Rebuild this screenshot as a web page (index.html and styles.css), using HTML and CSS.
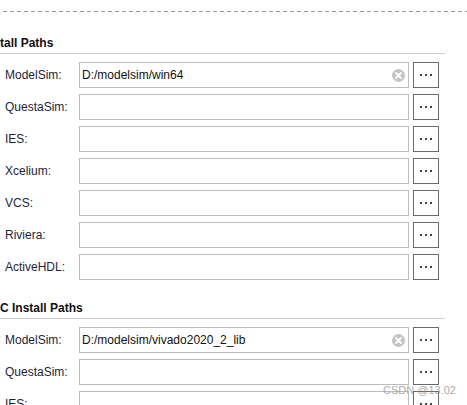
FILE: index.html
```html
<!DOCTYPE html>
<html>
<head>
<meta charset="utf-8">
<link rel="stylesheet" href="styles.css">
</head>
<body>
<div class="page">
  <div class="dash"></div>
  <section class="group first">
    <div class="group-title">tall Paths</div>
    <div class="rows">
      <div class="row"><span class="label">ModelSim:</span><div class="field"><span class="value">D:/modelsim/win64</span><span class="clear"><svg width="13" height="13" viewBox="0 0 13 13"><circle cx="6.5" cy="6.5" r="6.5" fill="#c4c4c4"/><path d="M4 4L9 9M9 4L4 9" stroke="#fff" stroke-width="1.8" stroke-linecap="round"/></svg></span></div><button class="browse"><i></i><i></i><i></i></button></div>
      <div class="row"><span class="label">QuestaSim:</span><div class="field"></div><button class="browse"><i></i><i></i><i></i></button></div>
      <div class="row"><span class="label">IES:</span><div class="field"></div><button class="browse"><i></i><i></i><i></i></button></div>
      <div class="row"><span class="label">Xcelium:</span><div class="field"></div><button class="browse"><i></i><i></i><i></i></button></div>
      <div class="row"><span class="label">VCS:</span><div class="field"></div><button class="browse"><i></i><i></i><i></i></button></div>
      <div class="row"><span class="label">Riviera:</span><div class="field"></div><button class="browse"><i></i><i></i><i></i></button></div>
      <div class="row"><span class="label">ActiveHDL:</span><div class="field"></div><button class="browse"><i></i><i></i><i></i></button></div>
    </div>
  </section>
  <section class="group second">
    <div class="group-title">C Install Paths</div>
    <div class="rows">
      <div class="row"><span class="label">ModelSim:</span><div class="field"><span class="value">D:/modelsim/vivado2020_2_lib</span><span class="clear"><svg width="13" height="13" viewBox="0 0 13 13"><circle cx="6.5" cy="6.5" r="6.5" fill="#c4c4c4"/><path d="M4 4L9 9M9 4L4 9" stroke="#fff" stroke-width="1.8" stroke-linecap="round"/></svg></span></div><button class="browse"><i></i><i></i><i></i></button></div>
      <div class="row"><span class="label">QuestaSim:</span><div class="field"></div><button class="browse"><i></i><i></i><i></i></button></div>
      <div class="row"><span class="label">IES:</span><div class="field"></div><button class="browse"><i></i><i></i><i></i></button></div>
    </div>
  </section>
  <div class="watermark">CSDN @13.02</div>
</div>
</body>
</html>
```
FILE: styles.css
```css
html, body {
  margin: 0;
  padding: 0;
  background: #fff;
}
body {
  width: 467px;
  height: 405px;
  overflow: hidden;
  font-family: "Liberation Sans", Arial, sans-serif;
  font-size: 12px;
}
.page {
  position: relative;
  height: 405px;
  overflow: hidden;
}
.dash {
  margin: 11px 0 0 3px;
  height: 1px;
  background: repeating-linear-gradient(to right, #9a9a9a 0 4px, transparent 4px 7px);
}
.group-title {
  font-weight: bold;
  color: #111;
  width: 445px;
  height: 14px;
  line-height: 14px;
  padding-bottom: 3px;
  border-bottom: 1px solid #cdcdcd;
}
.first { margin-top: 24px; }
.second { margin-top: 21px; }
.rows {
  display: flex;
  flex-direction: column;
  gap: 6px;
  padding-top: 8px;
}
.row {
  display: flex;
  align-items: center;
  height: 26px;
}
.label {
  width: 74px;
  padding-left: 5px;
  color: #1e1e3c;
}
.field {
  box-sizing: border-box;
  width: 330px;
  height: 26px;
  border: 1px solid #bcbcbc;
  display: flex;
  align-items: center;
  padding: 0 3px 0 2px;
  color: #111;
}
.value { flex: 1; }
.clear { display: flex; }
.browse {
  box-sizing: border-box;
  margin-left: 4px;
  width: 26px;
  height: 26px;
  border: 1px solid #6a6a6a;
  background: #fff;
  padding: 0;
  display: flex;
  align-items: center;
  justify-content: center;
  gap: 3px;
}
.browse i {
  width: 2px;
  height: 2px;
  background: #444;
}
.watermark {
  position: absolute;
  left: 383px;
  top: 384px;
  font-size: 11px;
  color: rgba(140, 140, 140, 0.75);
}
```
